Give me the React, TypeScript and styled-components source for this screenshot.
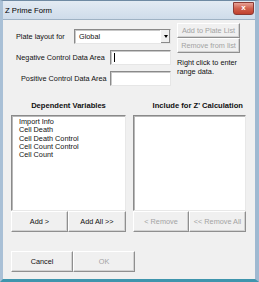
import styled, { createGlobalStyle } from "styled-components";

const Global = createGlobalStyle`
  html, body { margin: 0; padding: 0; background: #ffffff; }
  body { font-family: "Liberation Sans", Arial, sans-serif; }
`

const Frame = styled.div`
  width: 259px;
  height: 282px;
  box-sizing: border-box;
  display: flex;
  flex-direction: column;
  background: linear-gradient(180deg, #e3ebf3 0px, #cfdcea 18px, #bdd0e2 100%);
  border: 1px solid #6f8aa3;
  border-bottom: 3px solid #3f95ad;
  border-right: 4px solid #9fb9d1;
  border-left: 3px solid #a9c0d6;
`

const TitleBar = styled.div`
  height: 18px;
  flex-shrink: 0;
  display: flex;
  align-items: center;
  justify-content: space-between;
  padding: 0 1px 0 2px;
  font-size: 7.7px;
  color: #000;
`

const CloseBtn = styled.div`
  width: 19px;
  height: 11px;
  margin-bottom: 4px;
  border: 1px solid #8a3a34;
  border-radius: 0 0 3px 3px;
  background: linear-gradient(180deg, #e8a195 0%, #d0604d 50%, #c0402e 100%);
  color: #fff;
  font-size: 8px;
  font-weight: bold;
  line-height: 10px;
  text-align: center;
`

const Client = styled.div`
  flex: 1;
  background: #f0f0f0;
  border-top: 1px solid #9fb2c4;
  padding: 3px 0 0 8px;
  font-size: 7.3px;
  color: #111;
`

const Top = styled.div`
  display: flex;
`

const Fields = styled.div`
  display: grid;
  grid-template-columns: 58px 36px 61px;
  grid-auto-rows: 15px;
  row-gap: 6px;
  margin: 6px 0 0 5px;
  align-items: center;
`

const Label = styled.div<{ $span?: number; $indent?: number }>`
  grid-column: span ${({ $span }) => $span ?? 1};
  padding-left: ${({ $indent }) => $indent ?? 0}px;
  white-space: nowrap;
`

const Combo = styled.div`
  grid-column: span 2;
  height: 15px;
  box-sizing: border-box;
  display: flex;
  background: #fff;
  border: 1px solid;
  border-color: #8a8a8a #e6e6e6 #e6e6e6 #8a8a8a;
  box-shadow: inset 1px 1px 0 #c8c8c8;
`

const ComboText = styled.div`
  flex: 1;
  padding: 2px 0 0 4px;
`

const ComboArrow = styled.div`
  width: 9px;
  background: #f0f0f0;
  border-left: 1px solid #fff;
  box-shadow: inset -1px -1px 0 #8a8a8a;
  display: flex;
  align-items: center;
  justify-content: center;
  &::after {
    content: "";
    border-left: 2.5px solid transparent;
    border-right: 2.5px solid transparent;
    border-top: 3px solid #000;
  }
`

const TextBox = styled.div`
  height: 15px;
  box-sizing: border-box;
  background: #fff;
  border: 1px solid;
  border-color: #8a8a8a #e6e6e6 #e6e6e6 #8a8a8a;
  box-shadow: inset 1px 1px 0 #c8c8c8;
  padding: 2px 0 0 3px;
`

const Caret = styled.div`
  width: 1px;
  height: 9px;
  background: #000;
`

const Side = styled.div`
  display: flex;
  flex-direction: column;
  margin-left: 6px;
  width: 63px;
`

const Btn = styled.div<{ $disabled?: boolean; $w?: number; $h?: number }>`
  width: ${({ $w }) => $w ?? 63}px;
  height: ${({ $h }) => $h ?? 15}px;
  box-sizing: border-box;
  display: flex;
  align-items: center;
  justify-content: center;
  white-space: nowrap;
  background: #f0f0f0;
  border: 1px solid;
  border-color: #ffffff #8f8f8f #8f8f8f #ffffff;
  box-shadow: inset -1px -1px 0 #d2d2d2;
  color: ${({ $disabled }) => ($disabled ? "#a3a3a3" : "#111")};
`

const Hint = styled.div`
  margin-top: 5px;
  line-height: 9px;
`

const Lists = styled.div`
  display: flex;
  gap: 7px;
  margin-top: 15px;
`

const ListCol = styled.div<{ $w: number }>`
  width: ${({ $w }) => $w}px;
  display: flex;
  flex-direction: column;
`

const ListHead = styled.div<{ $align?: string }>`
  font-weight: bold;
  font-size: 7.6px;
  height: 12px;
  text-align: ${({ $align }) => $align ?? "center"};
  padding-right: ${({ $align }) => ($align === "right" ? "3px" : "0")};
  margin-bottom: 2px;
`

const ListBox = styled.div`
  height: 96px;
  box-sizing: border-box;
  background: #fff;
  border: 1px solid;
  border-color: #8a8a8a #e8e8e8 #e8e8e8 #8a8a8a;
  box-shadow: inset 1px 1px 0 #b8b8b8;
  padding: 2px 0 0 7px;
`

const Item = styled.div`
  height: 8.3px;
  line-height: 8.3px;
  white-space: nowrap;
  color: #111;
`

const BtnRow = styled.div`
  display: flex;
`

const Footer = styled.div`
  display: flex;
  margin-top: 19px;
`

const lists = ["Import Info", "Cell Death", "Cell Death Control", "Cell Count Control", "Cell Count"]

export default function App() {
  return (
    <>
      <Global />
      <Frame>
        <TitleBar>
          <span>Z Prime Form</span>
          <CloseBtn>x</CloseBtn>
        </TitleBar>
        <Client>
          <Top>
            <Fields>
              <Label>Plate layout for</Label>
              <Combo>
                <ComboText>Global</ComboText>
                <ComboArrow />
              </Combo>
              <Label $span={2}>Negative Control Data Area</Label>
              <TextBox><Caret /></TextBox>
              <Label $span={2} $indent={5}>Positive Control Data Area</Label>
              <TextBox />
            </Fields>
            <Side>
              <Btn $disabled>Add to Plate List</Btn>
              <Btn $disabled>Remove from list</Btn>
              <Hint>Right click to enter<br />range data.</Hint>
            </Side>
          </Top>
          <Lists>
            <ListCol $w={115}>
              <ListHead>Dependent Variables</ListHead>
              <ListBox>
                {lists.map((t) => <Item key={t}>{t}</Item>)}
              </ListBox>
              <BtnRow>
                <Btn $w={57} $h={21}>Add &gt;</Btn>
                <Btn $w={58} $h={21}>Add All &gt;&gt;</Btn>
              </BtnRow>
            </ListCol>
            <ListCol $w={113}>
              <ListHead $align="right">Include for Z' Calculation</ListHead>
              <ListBox />
              <BtnRow>
                <Btn $w={56} $h={21} $disabled>&lt; Remove</Btn>
                <Btn $w={57} $h={21} $disabled>&lt;&lt; Remove All</Btn>
              </BtnRow>
            </ListCol>
          </Lists>
          <Footer>
            <Btn $w={62} $h={21}>Cancel</Btn>
            <Btn $w={62} $h={21} $disabled>OK</Btn>
          </Footer>
        </Client>
      </Frame>
    </>
  )
}
